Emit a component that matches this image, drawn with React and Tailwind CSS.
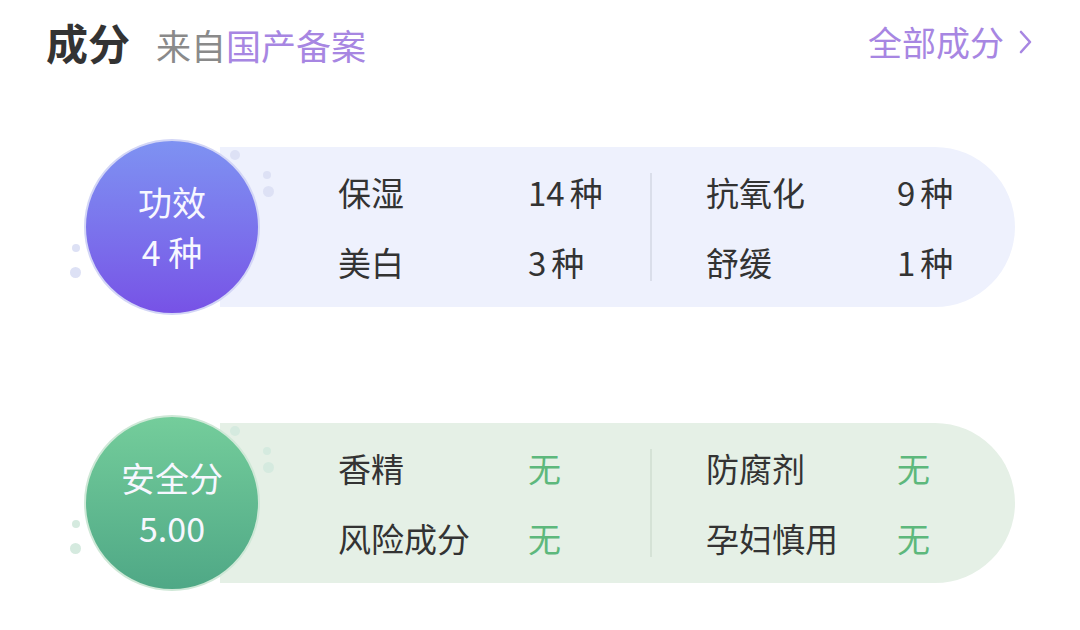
import React from "react";

const cards = [
  {
    title: "功效",
    sub: "4 种",
    circle: "bg-gradient-to-b from-[#7e92f2] to-[#7752e6] border-[#d3d6f6]",
    pill: "bg-[#eef1fd]",
    dot: "bg-[#dde1f5]",
    divider: "bg-[#dadeea]",
    green: false,
    rows: [
      [["保湿", "14", "种"], ["抗氧化", "9", "种"]],
      [["美白", "3", "种"], ["舒缓", "1", "种"]],
    ],
  },
  {
    title: "安全分",
    sub: "5.00",
    circle: "bg-gradient-to-b from-[#74cd9b] to-[#4fa886] border-[#cfe8d7]",
    pill: "bg-[#e5f0e6]",
    dot: "bg-[#d5eadf]",
    divider: "bg-[#d5e2d6]",
    green: true,
    rows: [
      [["香精", "无"], ["防腐剂", "无"]],
      [["风险成分", "无"], ["孕妇慎用", "无"]],
    ],
  },
];

function Value({ item, green }) {
  if (green) {
    return <span className="text-[#5db87c]">{item[1]}</span>;
  }
  return (
    <span className="text-[#333]">
      {item[1]}
      <span className="ml-[5px]">{item[2]}</span>
    </span>
  );
}

function Card({ card }) {
  const left = card.rows.map((r) => r[0]);
  const right = card.rows.map((r) => r[1]);
  return (
    <div className="relative flex items-center h-[176px] pl-[84px]">
      {/* 装饰小圆点 */}
      <span className={`absolute left-[230px] top-[11px] w-[10px] h-[10px] rounded-full ${card.dot}`} />
      <span className={`absolute left-[263px] top-[32px] w-[8px] h-[8px] rounded-full ${card.dot}`} />
      <span className={`absolute left-[263px] top-[47px] w-[11px] h-[11px] rounded-full ${card.dot}`} />
      <span className={`absolute left-[72px] top-[105px] w-[8px] h-[8px] rounded-full ${card.dot}`} />
      <span className={`absolute left-[70px] top-[128px] w-[11px] h-[11px] rounded-full ${card.dot}`} />

      <div
        className={`relative z-10 w-[176px] h-[176px] shrink-0 rounded-full border-2 flex flex-col items-center justify-center text-[#f7f7ff] text-[34px] leading-[50px] ${card.circle}`}
      >
        <span>{card.title}</span>
        <span>{card.sub}</span>
      </div>

      <div className={`-ml-[40px] w-[795px] h-[160px] rounded-r-full flex items-center pl-[118px] ${card.pill}`}>
        <div className="w-[312px] flex flex-col gap-[22px]">
          {left.map((it) => (
            <div key={it[0]} className="flex text-[33px] leading-[48px]">
              <span className="w-[190px] text-[#333]">{it[0]}</span>
              <Value item={it} green={card.green} />
            </div>
          ))}
        </div>
        <div className={`w-[2px] h-[108px] ${card.divider}`} />
        <div className="pl-[54px] flex flex-col gap-[22px]">
          {right.map((it) => (
            <div key={it[0]} className="flex text-[33px] leading-[48px]">
              <span className="w-[191px] text-[#333]">{it[0]}</span>
              <Value item={it} green={card.green} />
            </div>
          ))}
        </div>
      </div>
    </div>
  );
}

export default function App() {
  return (
    <div
      className="w-[1080px] h-[630px] bg-white overflow-hidden"
      style={{ fontFamily: '"Noto Sans CJK SC", "Noto Sans", sans-serif' }}
    >
      <div className="h-[84px] flex items-center justify-between pl-[46px] pr-[46px]">
        <div className="flex items-baseline">
          <span className="text-[42px] font-bold text-[#333] leading-none">成分</span>
          <span className="ml-[26px] text-[35px] text-[#8a8a8a] leading-none">来自</span>
          <span className="text-[35px] text-[#a786e2] leading-none">国产备案</span>
        </div>
        <div className="flex items-center text-[34px] text-[#a786e2] leading-none">
          <span>全部成分</span>
          <svg width="16" height="26" viewBox="0 0 16 26" className="ml-[14px]">
            <polyline points="3,3 12,13 3,23" fill="none" stroke="#a786e2" strokeWidth="2.6" strokeLinecap="round" strokeLinejoin="round" />
          </svg>
        </div>
      </div>

      <div className="mt-[55px]">
        <Card card={cards[0]} />
      </div>
      <div className="mt-[100px]">
        <Card card={cards[1]} />
      </div>
    </div>
  );
}
